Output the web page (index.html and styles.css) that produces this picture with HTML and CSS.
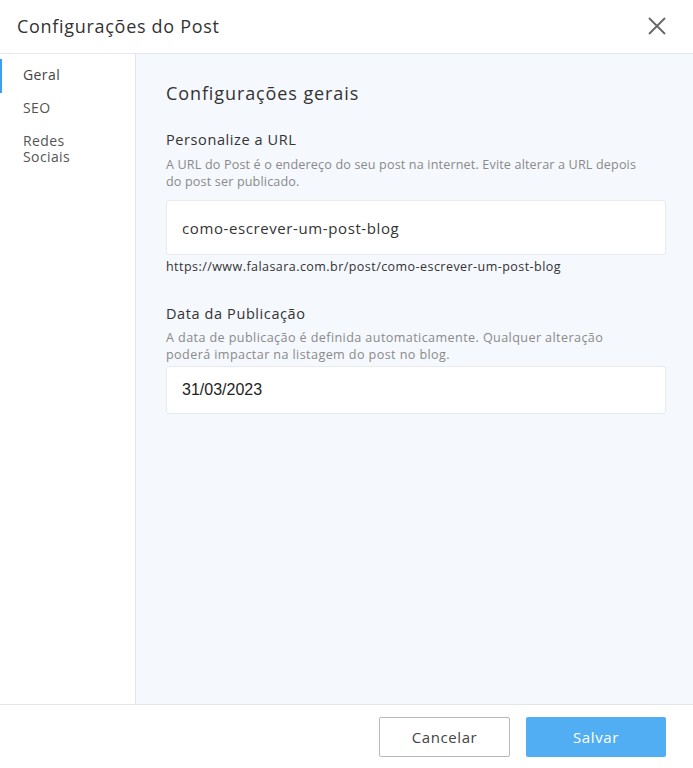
FILE: index.html
```html
<!DOCTYPE html>
<html lang="pt-BR">
<head>
<meta charset="utf-8">
<title>Configurações do Post</title>
<link rel="stylesheet" href="styles.css">
</head>
<body>
<div class="modal">
  <header class="modal-header">
    <h1 class="modal-title">Configurações do Post</h1>
    <button class="close-btn" aria-label="Fechar">
      <svg width="18" height="18" viewBox="0 0 18 18"><path d="M1 1L17 17M17 1L1 17" stroke="#666" stroke-width="1.8" fill="none"/></svg>
    </button>
  </header>
  <div class="modal-body">
    <nav class="sidebar">
      <a class="nav-item active">Geral</a>
      <a class="nav-item">SEO</a>
      <a class="nav-item">Redes<br>Sociais</a>
    </nav>
    <main class="content">
      <h2 class="section-title">Configurações gerais</h2>
      <div class="field">
        <div class="field-label">Personalize a URL</div>
        <div class="field-desc">A URL do Post é o endereço do seu post na internet. Evite alterar a URL depois<br>do post ser publicado.</div>
        <div class="input input-url">como-escrever-um-post-blog</div>
        <div class="url-preview">https://www.falasara.com.br/post/como-escrever-um-post-blog</div>
      </div>
      <div class="field field-date">
        <div class="field-label">Data da Publicação</div>
        <div class="field-desc">A data de publicação é definida automaticamente. Qualquer alteração<br>poderá impactar na listagem do post no blog.</div>
        <div class="input input-date">31/03/2023</div>
      </div>
    </main>
  </div>
  <footer class="modal-footer">
    <button class="btn btn-cancel">Cancelar</button>
    <button class="btn btn-save">Salvar</button>
  </footer>
</div>
</body>
</html>
```
FILE: styles.css
```css
* { box-sizing: border-box; }
html, body { margin: 0; padding: 0; }
body {
  font-family: "Open Sans", "Noto Sans", sans-serif;
  color: #333;
  background: #fff;
}
.modal {
  width: 693px;
  height: 768px;
  display: flex;
  flex-direction: column;
  background: #fff;
}
.modal-header {
  height: 54px;
  border-bottom: 1px solid #e6e8eb;
  display: flex;
  align-items: center;
  justify-content: space-between;
  padding: 0 27px 0 17px;
  flex-shrink: 0;
}
.modal-title {
  margin: 0;
  font-size: 18px;
  font-weight: 400;
  color: #333;
  letter-spacing: 0.7px;
  padding-bottom: 2px;
}
.close-btn {
  border: 0;
  background: none;
  padding: 0;
  width: 18px;
  height: 18px;
  display: flex;
  margin-bottom: 2px;
}
.modal-body {
  flex: 1;
  display: flex;
  min-height: 0;
}
.sidebar {
  width: 136px;
  border-right: 1px solid #e3e5e8;
  display: flex;
  flex-direction: column;
  padding-top: 6px;
  flex-shrink: 0;
}
.nav-item {
  position: relative;
  padding: 7px 0 7px 23px;
  font-size: 14px;
  line-height: 16px;
  color: #555;
  letter-spacing: 0.4px;
  margin-bottom: 3px;
}
.nav-item.active { color: #444; padding-top: 7px; padding-bottom: 10px; margin-bottom: 0; }
.nav-item.active::before {
  content: "";
  position: absolute;
  left: 0;
  top: -1px;
  bottom: 0;
  width: 2px;
  background: #3aa0f0;
}
.content {
  flex: 1;
  background: #f5f8fd;
  padding: 26px 27px 0 30px;
}
.section-title {
  margin: 0 0 24px;
  font-size: 18px;
  font-weight: 400;
  color: #333;
  letter-spacing: 0.9px;
  line-height: 26px;
}
.field-label {
  font-size: 14.5px;
  line-height: 20px;
  color: #333;
  letter-spacing: 0.6px;
}
.field-desc {
  font-size: 12.6px;
  line-height: 17px;
  color: #8a8a8a;
  margin-top: 6px;
  letter-spacing: 0.15px;
}
.field-date .field-desc { letter-spacing: 0.4px; margin-top: 5px; }
.input {
  background: #fff;
  border: 1px solid #e8eaed;
  border-radius: 3px;
  display: flex;
  align-items: center;
  padding-left: 15px;
  color: #333;
}
.input-url {
  height: 55px;
  margin-top: 10px;
  font-size: 15px;
  letter-spacing: 0.6px;
}
.url-preview {
  font-size: 12.5px;
  line-height: 16px;
  margin-top: 4px;
  color: #333;
  letter-spacing: 0.45px;
}
.field-date { margin-top: 29px; }
.input-date {
  height: 48px;
  margin-top: 3px;
  font-family: "Liberation Sans", Arial, sans-serif;
  font-size: 16px;
  color: #222;
}
.modal-footer {
  height: 64px;
  border-top: 1px solid #e3e5e8;
  display: flex;
  justify-content: flex-end;
  align-items: flex-start;
  padding: 12px 27px 0 0;
  gap: 16px;
  flex-shrink: 0;
}
.btn {
  height: 40px;
  font-family: "Open Sans", "Noto Sans", sans-serif;
  font-size: 15px;
  border-radius: 2px;
  cursor: pointer;
  letter-spacing: 0.6px;
}
.btn-cancel {
  width: 131px;
  background: #fff;
  border: 1px solid #b8b8b8;
  color: #444;
}
.btn-save {
  width: 140px;
  background: #51aef3;
  border: 0;
  color: #fff;
}
```
